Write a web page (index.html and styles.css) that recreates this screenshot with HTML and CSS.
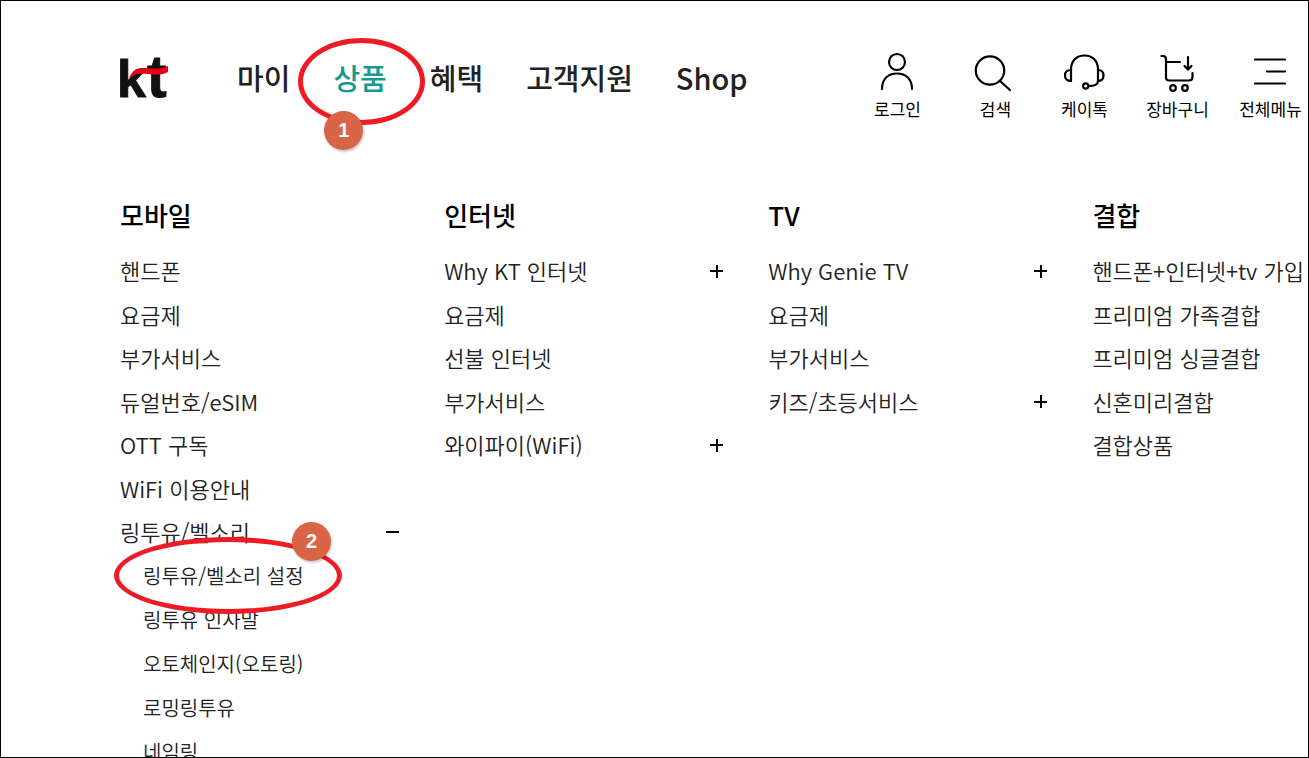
FILE: index.html
```html
<!DOCTYPE html>
<html lang="ko">
<head>
    <meta charset="UTF-8">
    <meta name="viewport" content="width=device-width, initial-scale=1.0">
    <title>KT 상품 메뉴</title>
    <link rel="stylesheet" href="styles.css">
</head>
<body>

    <header class="header">
        <a class="logo" href="#" aria-label="kt">
            <svg width="49" height="42" viewBox="0 0 49 42">
                <text class="logo-text" x="-3" y="39" font-size="52">k</text>
                <text class="logo-text" x="27" y="39" font-size="59">t</text>
                <path d="M9 20C12 14 15 10 22 10C30 10 40 12 48 8V14C43 17 36 17 28 16C19 15 15 16 9 20Z" fill="#e60012"/>
            </svg>
        </a>

        <nav class="nav">
            <a href="#">마이</a>
            <a class="active" href="#">상품
                <span class="ring ring-1"></span>
                <span class="badge badge-1">1</span>
            </a>
            <a href="#">혜택</a>
            <a href="#">고객지원</a>
            <a href="#">Shop</a>
        </nav>

        <div class="tools">
            <a class="tool tool-login" href="#">
                <svg class="icon" viewBox="0 0 40 40">
                    <circle cx="20" cy="12" r="8"/>
                    <path d="M5 39C5 29 11 23.500 20 23.500S35 29 35 39"/>
                </svg>
                로그인
            </a>
            <a class="tool tool-search" href="#">
                <svg class="icon" viewBox="0 0 40 40">
                    <circle cx="15" cy="20.500" r="14.200"/>
                    <path d="M25 31L35 40"/>
                </svg>
                검색
            </a>
            <a class="tool" href="#">
                <svg class="icon" viewBox="0 0 40 40">
                    <path d="M7 31V19.500C7 11 12.500 5.500 20.500 5.500S34 11 34 19.500V31"/>
                    <path d="M7 20C3 20 1 22 1 25.500S3 31 7 31M34 20C38 20 39.500 22 39.500 25.500S38 31 34 31C34 34.500 31 36 25 36"/>
                    <circle cx="21.700" cy="36" r="2.600"/>
                </svg>
                케이톡
            </a>
            <a class="tool" href="#">
                <svg class="icon" viewBox="0 0 40 40">
                    <path d="M4.500 6H6Q9 6 9 9V27.500Q9 30.500 12 30.500H32Q35.500 30.500 35.500 27V23"/>
                    <path d="M9 12H23M31 7V19M27.500 16L31 19.500L34.500 16"/>
                    <circle cx="16" cy="38" r="2.800"/>
                    <circle cx="28" cy="38" r="2.800"/>
                </svg>
                장바구니
            </a>
            <a class="tool" href="#">
                <svg class="icon" viewBox="0 0 40 40">
                    <path d="M5 9.500H35M17 21.500H35M5 33.500H35"/>
                </svg>
                전체메뉴
            </a>
        </div>
    </header>

    <main class="menu">
        <section>
            <h2>모바일</h2>
            <ul class="list">
                <li><a href="#">핸드폰</a></li>
                <li><a href="#">요금제</a></li>
                <li><a href="#">부가서비스</a></li>
                <li><a href="#">듀얼번호/eSIM</a></li>
                <li><a href="#">OTT 구독</a></li>
                <li><a href="#">WiFi 이용안내</a></li>
                <li><a href="#">링투유/벨소리</a><button class="toggle open" type="button" aria-label="접기"></button></li>
            </ul>
            <ul class="sub-list">
                <li>
                    <a class="marked" href="#">링투유/벨소리 설정
                        <span class="ring ring-2"></span>
                        <span class="badge badge-2">2</span>
                    </a>
                </li>
                <li><a href="#">링투유 인사말</a></li>
                <li><a href="#">오토체인지(오토링)</a></li>
                <li><a href="#">로밍링투유</a></li>
                <li><a href="#">네임링</a></li>
            </ul>
        </section>

        <section>
            <h2>인터넷</h2>
            <ul class="list">
                <li><a href="#">Why KT 인터넷</a><button class="toggle" type="button" aria-label="펼치기"></button></li>
                <li><a href="#">요금제</a></li>
                <li><a href="#">선불 인터넷</a></li>
                <li><a href="#">부가서비스</a></li>
                <li><a href="#">와이파이(WiFi)</a><button class="toggle" type="button" aria-label="펼치기"></button></li>
            </ul>
        </section>

        <section>
            <h2>TV</h2>
            <ul class="list">
                <li><a href="#">Why Genie TV</a><button class="toggle" type="button" aria-label="펼치기"></button></li>
                <li><a href="#">요금제</a></li>
                <li><a href="#">부가서비스</a></li>
                <li><a href="#">키즈/초등서비스</a><button class="toggle" type="button" aria-label="펼치기"></button></li>
            </ul>
        </section>

        <section>
            <h2>결합</h2>
            <ul class="list">
                <li><a href="#">핸드폰+인터넷+tv 가입</a></li>
                <li><a href="#">프리미엄 가족결합</a></li>
                <li><a href="#">프리미엄 싱글결합</a></li>
                <li><a href="#">신혼미리결합</a></li>
                <li><a href="#">결합상품</a></li>
            </ul>
        </section>
    </main>

</body>
</html>
```
FILE: styles.css
```css
* {
    box-sizing: border-box;
}

body {
    height: 100vh;
    margin: 0;
    border: 1px solid #000;
    overflow: hidden;
    background-color: #fff;
    color: #222;
    font-family: "Noto Sans CJK KR", sans-serif;
    white-space: nowrap;
}

a {
    color: inherit;
    text-decoration: none;
}

/* Header */
.header {
    display: flex;
    align-items: flex-start;
    padding: 49px 0 0 119px;
}

.logo {
    margin-top: 8px;
    margin-right: 68px;
}

.logo svg {
    display: block;
    overflow: visible;
}

.logo-text {
    font-family: "Liberation Sans", sans-serif;
    font-weight: bold;
    fill: #111;
    stroke: #111;
    stroke-width: 1;
}

.nav {
    display: flex;
    gap: 43px;
    margin-top: 7px;
    font-size: 29px;
    font-weight: 500;
    line-height: 40px;
}

.nav a {
    position: relative;
}

.nav .active {
    color: #149a91;
}

.tools {
    display: flex;
    margin-left: auto;
    margin-right: -9px;
}

.tool {
    display: flex;
    flex-direction: column;
    align-items: center;
    width: 93px;
    color: #000;
    font-size: 17px;
    line-height: 24px;
}

.tool-login {
    width: 111px;
}

.tool-search {
    width: 85px;
}

.icon {
    width: 40px;
    height: 40px;
    margin: 0 1px 7px 0;
    overflow: visible;
    fill: none;
    stroke: #000;
    stroke-width: 2.2;
    stroke-linecap: round;
    stroke-linejoin: round;
}

/* Menu columns */
.menu {
    display: grid;
    grid-template-columns: 4fr 4fr 4fr 3fr;
    column-gap: 44px;
    padding: 74px 4px 0 119px;
}

h2 {
    margin: 0 0 13px;
    color: #000;
    font-size: 26px;
    font-weight: 500;
    line-height: 40px;
}

.list,
.sub-list {
    margin: 0;
    padding: 0;
    list-style: none;
    font-size: 22px;
    font-weight: 350;
}

.list li,
.sub-list li {
    display: flex;
    justify-content: space-between;
    align-items: center;
    height: 44px;
}

.list li:nth-child(even) {
    height: 43px;
}

.sub-list {
    padding-left: 23px;
    font-size: 20px;
}

.toggle {
    width: 15px;
    height: 15px;
    margin: 2px 0 0;
    padding: 0;
    border: none;
    background: linear-gradient(#000, #000) center / 13px 2px no-repeat,
                linear-gradient(#000, #000) center / 2px 13px no-repeat;
    cursor: pointer;
}

.toggle.open {
    background: linear-gradient(#000, #000) center / 13px 2px no-repeat;
}

/* Step markers over the menu */
.marked {
    position: relative;
}

.ring {
    position: absolute;
    border: 5px solid #ed1c24;
    border-radius: 50%;
}

.ring-1 {
    top: -19px;
    left: -35px;
    width: 127px;
    height: 87px;
}

.ring-2 {
    top: -24px;
    left: -29px;
    width: 228px;
    height: 77px;
}

.badge {
    position: absolute;
    width: 39px;
    height: 39px;
    border-radius: 50%;
    background-color: #d96546;
    box-shadow: 1px 2px 2px rgba(0, 0, 0, 0.2);
    color: #fff;
    font-family: "Liberation Sans", sans-serif;
    font-size: 20px;
    font-weight: bold;
    line-height: 39px;
    text-align: center;
}

.badge-1 {
    top: 54px;
    left: -9px;
}

.badge-2 {
    top: -39px;
    left: 149px;
}
```
